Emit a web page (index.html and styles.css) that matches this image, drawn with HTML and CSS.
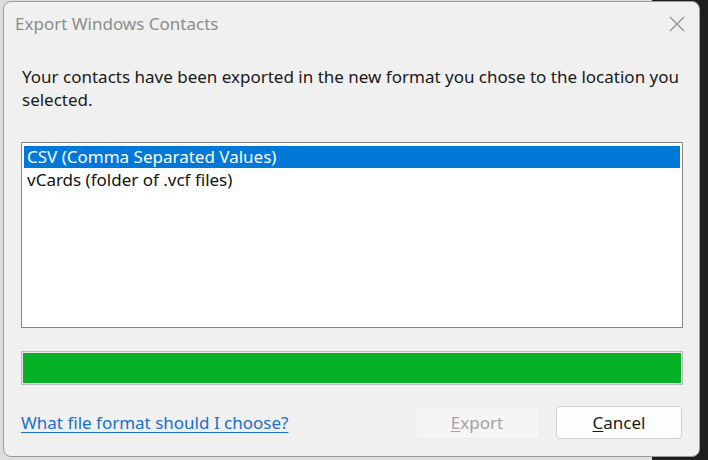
FILE: index.html
```html
<!DOCTYPE html>
<html lang="en">
<head>
<meta charset="utf-8">
<title>Export Windows Contacts</title>
<link rel="stylesheet" href="styles.css">
</head>
<body>
<div class="dialog">
  <div class="titlebar">
    <span class="title">Export Windows Contacts</span>
    <span class="close" aria-label="Close">
      <svg width="16" height="16" viewBox="0 0 16 16"><path d="M1 1 L15 15 M15 1 L1 15" stroke="#8a8a8a" stroke-width="1.1" fill="none"/></svg>
    </span>
  </div>
  <div class="content">
    <p class="message">Your contacts have been exported in the new format you chose to the location you selected.</p>
    <ul class="listbox">
      <li class="item selected">CSV (Comma Separated Values)</li>
      <li class="item">vCards (folder of .vcf files)</li>
    </ul>
    <div class="progress"><div class="progress-fill"></div></div>
    <div class="footer">
      <a class="link" href="#">What file format should I choose?</a>
      <div class="buttons">
        <button class="btn disabled" disabled><u>E</u>xport</button>
        <button class="btn"><u>C</u>ancel</button>
      </div>
    </div>
  </div>
</div>
</body>
</html>
```
FILE: styles.css
```css
* { box-sizing: border-box; }
html, body { margin: 0; padding: 0; }
body {
  width: 708px;
  height: 460px;
  overflow: hidden;
  background: linear-gradient(to right, #dedede 0, #dedede 652px, #1e1e1e 652px);
  font-family: "Noto Sans", "Open Sans", sans-serif;
  padding: 1px 0 0 3px;
}
.dialog {
  width: 697px;
  height: 456px;
  background: #f0f0f0;
  border: 1px solid #9a9a9a;
  border-radius: 8px;
  display: flex;
  flex-direction: column;
}
.titlebar {
  height: 43px;
  display: flex;
  align-items: center;
  justify-content: space-between;
  padding: 0 14px 0 11px;
}
.title {
  font-size: 17px;
  color: #8c8c8c;
}
.close { display: flex; }
.content {
  padding: 20px 17px 0 17px;
  display: flex;
  flex-direction: column;
}
.message {
  margin: 0;
  font-size: 17px;
  line-height: 23px;
  color: #1a1a1a;
  padding-left: 1px;
}
.listbox {
  list-style: none;
  margin: 31px 0 0 0;
  padding: 3px 2px;
  height: 186px;
  width: 662px;
  background: #fff;
  border: 1px solid #868686;
}
.item {
  height: 23px;
  line-height: 22px;
  padding-left: 3px;
  font-size: 17px;
  color: #111;
}
.item.selected {
  background: #0078d7;
  color: #fff;
  height: 22px;
  line-height: 22px;
  margin-bottom: 1px;
}
.progress {
  margin-top: 23px;
  width: 662px;
  height: 34px;
  border: 1px solid #bcbcbc;
  background: #e6e6e6;
  padding: 1px;
}
.progress-fill {
  width: 100%;
  height: 100%;
  background: #06b025;
}
.footer {
  margin-top: 21px;
  width: 661px;
  display: flex;
  align-items: center;
  justify-content: space-between;
}
.link {
  font-size: 17px;
  color: #1a6fc9;
  text-decoration: underline;
  text-underline-offset: 3px;
}
.buttons {
  display: flex;
  gap: 16px;
}
.btn {
  width: 126px;
  height: 33px;
  border: 1px solid #d0d0d0;
  border-radius: 4px;
  background: #fdfdfd;
  font-family: inherit;
  font-size: 17px;
  color: #1a1a1a;
  padding: 0;
}
.btn u { text-underline-offset: 2px; }
.btn.disabled {
  background: #f5f5f5;
  border-color: #ebebeb;
  color: #a2a2a2;
}
```
